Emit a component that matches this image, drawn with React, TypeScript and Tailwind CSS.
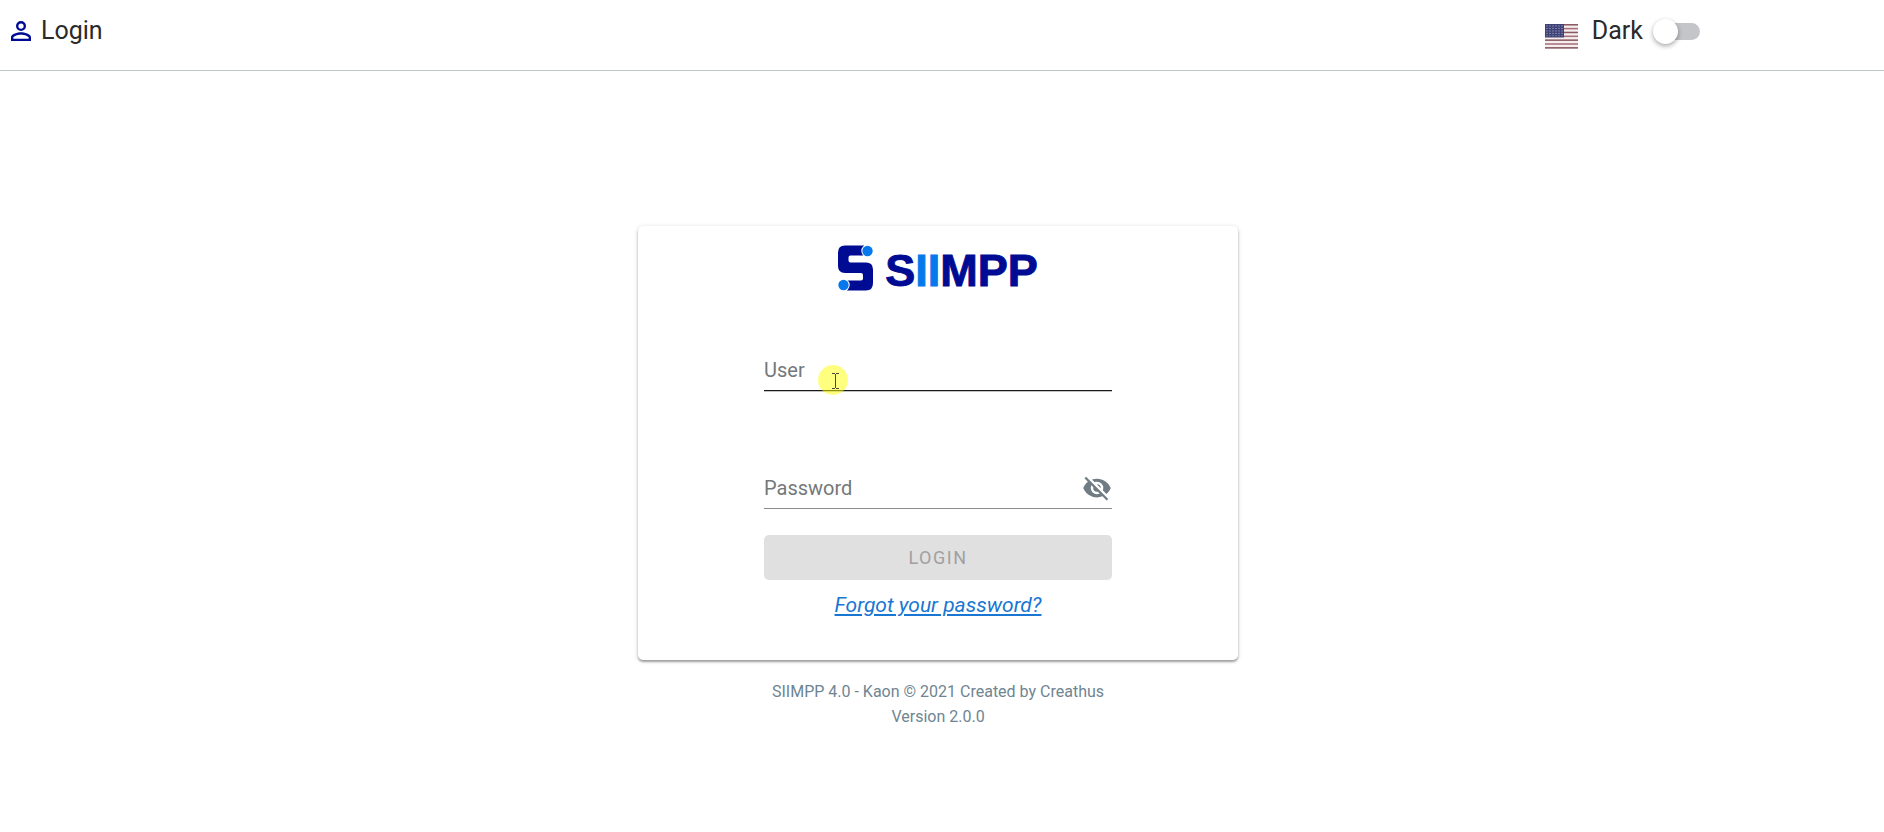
import { useState } from "react";

function UserIcon() {
  return (
    <svg viewBox="4 4 16 16" className="size-5 fill-[#000b94]" aria-hidden="true">
      <path d="M12 4a4 4 0 1 1 0 8 4 4 0 0 1 0-8m0 1.9a2.1 2.1 0 1 0 0 4.2 2.1 2.1 0 0 0 0-4.2M12 13c2.67 0 8 1.33 8 4v3H4v-3c0-2.67 5.33-4 8-4m0 1.9c-2.97 0-6.1 1.46-6.1 2.1v1.1h12.2V17c0-.64-3.13-2.1-6.1-2.1" />
    </svg>
  );
}

function Flag() {
  const stripes = [0, 2, 4, 6, 8, 10, 12];
  const rows = [2, 4.6, 7.2, 9.8, 12.2];
  const cols = [2, 5, 8, 11, 14, 17];
  return (
    <svg viewBox="0 0 33 26" preserveAspectRatio="none" className="h-[25px] w-[33px]" aria-hidden="true">
      <rect width="33" height="26" fill="#f4eeee" />
      {stripes.map((s) => (
        <rect key={s} y={s * 2} width="33" height="1.6" fill={s % 4 === 0 ? "#8a5a60" : "#a9707b"} />
      ))}
      <rect width="19" height="14" fill="#3f4276" />
      {rows.map((y) => cols.map((x) => <circle key={`${x}-${y}`} cx={x} cy={y} r="0.6" fill="#a9adc9" />))}
    </svg>
  );
}

function Logo() {
  return (
    <div className="flex items-start justify-center gap-[11px]">
      <svg viewBox="0 0 36 46" className="h-[46px] w-9" aria-hidden="true">
        <path
          d="M7 0.500H26V10.500H12.500Q10.500 10.500 10.500 12.500V15.500Q10.500 17.500 12.500 17.500H28Q35 17.500 35 24.500V38Q35 45.500 28 45.500H9V35.500H23Q25 35.500 25 33.500V30Q25 28 23 28H7Q0 28 0 21V7.500Q0 .5 7 .5Z"
          fill="#000b94"
        />
        <circle cx="29.500" cy="6" r="6.200" fill="#fff" />
        <circle cx="29.500" cy="6" r="5.200" fill="#0579ec" />
        <circle cx="5.500" cy="40" r="6.200" fill="#fff" />
        <circle cx="5.500" cy="40" r="5.200" fill="#0579ec" />
      </svg>
      <span className="pt-[3px] font-['Liberation_Sans',sans-serif] text-[45px] leading-[46px] font-bold text-[#000b94] [-webkit-text-stroke:1px]">
        S<span className="text-[#0579ec]">II</span>MPP
      </span>
    </div>
  );
}

function EyeOff() {
  return (
    <svg viewBox="0 0 24 24" className="size-[30px] fill-[#6f7c84]" aria-hidden="true">
      <path d="M11.83 9 15 12.160V12a3 3 0 0 0-3-3zm-4.300.800 1.550 1.550C9.030 11.560 9 11.770 9 12a3 3 0 0 0 3 3c.22 0 .44-.03.650-.08l1.550 1.550c-.67.330-1.410.530-2.200.530a5 5 0 0 1-5-5c0-.79.200-1.530.530-2.200M2 4.270l2.280 2.280.450.450C3.080 8.300 1.780 10 1 12c1.730 4.390 6 7.500 11 7.500 1.550 0 3.030-.3 4.380-.84l.430.420L19.730 22 21 20.730 3.270 3M12 7a5 5 0 0 1 5 5c0 .64-.13 1.260-.36 1.820l2.930 2.930c1.500-1.250 2.700-2.890 3.430-4.750-1.730-4.390-6-7.500-11-7.500-1.400 0-2.740.250-4 .7l2.170 2.150C10.740 7.130 11.350 7 12 7" />
    </svg>
  );
}

function Pointer() {
  return (
    <svg
      viewBox="0 0 30 30"
      className="pointer-events-none absolute top-[15px] left-[54px] size-[30px]"
      aria-hidden="true"
    >
      <circle cx="15" cy="15" r="15" fill="#ffff00" fillOpacity="0.5" />
      <path d="M14 8.500h3M18 8.500h3M14 23.500h3M18 23.500h3M17.500 9v14" stroke="#4b4830" fill="none" />
    </svg>
  );
}

export default function App() {
  const [dark, setDark] = useState(false);
  const [shown, setShown] = useState(false);
  const field =
    "h-10 w-full bg-transparent text-xl text-[#222] outline-none placeholder:text-[#74787a]";

  return (
    <div className="min-h-screen bg-white font-['Roboto',sans-serif] text-[#212121]">
      <header className="flex h-[71px] items-start justify-between border-b border-[#bfc6c8] pt-[11px] pr-[184px] pl-[11px]">
        <a href="#login" className="flex h-10 items-center gap-2.5 text-[25px] text-[#2a2a2a]">
          <UserIcon />
          Login
        </a>
        <div className="flex h-10 items-center">
          <button type="button" aria-label="Language" className="mt-2.5 mr-3.5">
            <Flag />
          </button>
          <label className="flex items-center gap-2.5 text-[25px] text-[#2a2a2a]">
            Dark
            <span className="relative flex h-[25px] w-[47px] items-center justify-end">
              <input
                type="checkbox"
                role="switch"
                checked={dark}
                onChange={(e) => setDark(e.target.checked)}
                className="peer h-[17px] w-[43px] appearance-none rounded-full bg-[#c3c5c9]"
              />
              <span className="pointer-events-none absolute top-0 left-0 size-[25px] rounded-full bg-white shadow-[0_2px_5px_rgba(0,0,0,0.35)] peer-checked:left-6" />
            </span>
          </label>
        </div>
      </header>

      <main className="flex flex-col items-center px-4 pt-[155px] pr-6">
        <section className="w-full max-w-[600px] rounded-[5px] bg-white px-[126px] pt-[19px] pb-10 shadow-[0_2px_2px_rgba(0,0,0,0.3),0_1px_5px_rgba(0,0,0,0.16)]">
          <Logo />
          <form className="pt-14" onSubmit={(e) => e.preventDefault()}>
            <div className="relative border-b border-[#1a1a1a] shadow-[0_1px_0_#c4c4c4]">
              <input aria-label="User" placeholder="User" className={field} />
              <Pointer />
            </div>
            <div className="mt-[77px] flex items-center border-b border-[#8c8c8c]">
              <input
                aria-label="Password"
                placeholder="Password"
                type={shown ? "text" : "password"}
                className={field}
              />
              <button type="button" aria-label="Show password" onClick={() => setShown(!shown)}>
                <EyeOff />
              </button>
            </div>
            <button
              type="submit"
              disabled
              className="mt-[26px] h-[45px] w-full rounded-[5px] bg-[#e0e0e0] text-[18px] tracking-[1.5px] text-[#a0a0a0]"
            >
              LOGIN
            </button>
            <p className="pt-2.5 text-center text-[21px] leading-[30px]">
              <a href="#forgot" className="text-[#1976d2] italic underline">
                Forgot your password?
              </a>
            </p>
          </form>
        </section>
        <footer className="pt-[19px] text-center text-base leading-[25px] text-[#6f8592]">
          <p>SIIMPP 4.0 - Kaon © 2021 Created by Creathus</p>
          <p>Version 2.0.0</p>
        </footer>
      </main>
    </div>
  );
}
